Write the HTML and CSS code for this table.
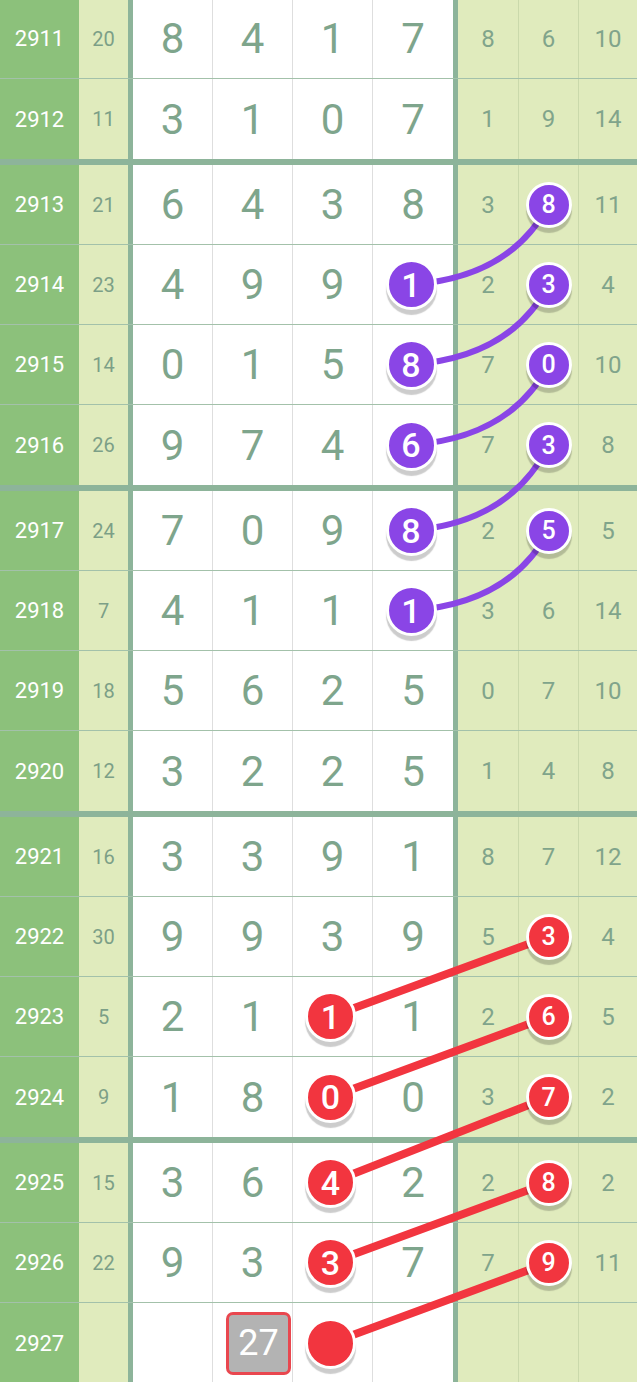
FILE: index.html
```html
<!DOCTYPE html>
<html>
<head>
<meta charset="utf-8">
<link rel="stylesheet" href="styles.css">
</head>
<body>
<div class="board">
  <div class="table">
    <div class="group">
      <div class="row"><div class="c issue">2911</div><div class="c sum">20</div><div class="c m m1">8</div><div class="c m">4</div><div class="c m">1</div><div class="c m">7</div><div class="c r r1">8</div><div class="c r">6</div><div class="c r">10</div></div>
      <div class="row"><div class="c issue">2912</div><div class="c sum">11</div><div class="c m m1">3</div><div class="c m">1</div><div class="c m">0</div><div class="c m">7</div><div class="c r r1">1</div><div class="c r">9</div><div class="c r">14</div></div>
    </div>
    <div class="group">
      <div class="row"><div class="c issue">2913</div><div class="c sum">21</div><div class="c m m1">6</div><div class="c m">4</div><div class="c m">3</div><div class="c m">8</div><div class="c r r1">3</div><div class="c r"><span class="ball sm purple">8</span></div><div class="c r">11</div></div>
      <div class="row"><div class="c issue">2914</div><div class="c sum">23</div><div class="c m m1">4</div><div class="c m">9</div><div class="c m">9</div><div class="c m"><span class="ball purple">1</span></div><div class="c r r1">2</div><div class="c r"><span class="ball sm purple">3</span></div><div class="c r">4</div></div>
      <div class="row"><div class="c issue">2915</div><div class="c sum">14</div><div class="c m m1">0</div><div class="c m">1</div><div class="c m">5</div><div class="c m"><span class="ball purple">8</span></div><div class="c r r1">7</div><div class="c r"><span class="ball sm purple">0</span></div><div class="c r">10</div></div>
      <div class="row"><div class="c issue">2916</div><div class="c sum">26</div><div class="c m m1">9</div><div class="c m">7</div><div class="c m">4</div><div class="c m"><span class="ball purple">6</span></div><div class="c r r1">7</div><div class="c r"><span class="ball sm purple">3</span></div><div class="c r">8</div></div>
    </div>
    <div class="group">
      <div class="row"><div class="c issue">2917</div><div class="c sum">24</div><div class="c m m1">7</div><div class="c m">0</div><div class="c m">9</div><div class="c m"><span class="ball purple">8</span></div><div class="c r r1">2</div><div class="c r"><span class="ball sm purple">5</span></div><div class="c r">5</div></div>
      <div class="row"><div class="c issue">2918</div><div class="c sum">7</div><div class="c m m1">4</div><div class="c m">1</div><div class="c m">1</div><div class="c m"><span class="ball purple">1</span></div><div class="c r r1">3</div><div class="c r">6</div><div class="c r">14</div></div>
      <div class="row"><div class="c issue">2919</div><div class="c sum">18</div><div class="c m m1">5</div><div class="c m">6</div><div class="c m">2</div><div class="c m">5</div><div class="c r r1">0</div><div class="c r">7</div><div class="c r">10</div></div>
      <div class="row"><div class="c issue">2920</div><div class="c sum">12</div><div class="c m m1">3</div><div class="c m">2</div><div class="c m">2</div><div class="c m">5</div><div class="c r r1">1</div><div class="c r">4</div><div class="c r">8</div></div>
    </div>
    <div class="group">
      <div class="row"><div class="c issue">2921</div><div class="c sum">16</div><div class="c m m1">3</div><div class="c m">3</div><div class="c m">9</div><div class="c m">1</div><div class="c r r1">8</div><div class="c r">7</div><div class="c r">12</div></div>
      <div class="row"><div class="c issue">2922</div><div class="c sum">30</div><div class="c m m1">9</div><div class="c m">9</div><div class="c m">3</div><div class="c m">9</div><div class="c r r1">5</div><div class="c r"><span class="ball sm red">3</span></div><div class="c r">4</div></div>
      <div class="row"><div class="c issue">2923</div><div class="c sum">5</div><div class="c m m1">2</div><div class="c m">1</div><div class="c m"><span class="ball red">1</span></div><div class="c m">1</div><div class="c r r1">2</div><div class="c r"><span class="ball sm red">6</span></div><div class="c r">5</div></div>
      <div class="row"><div class="c issue">2924</div><div class="c sum">9</div><div class="c m m1">1</div><div class="c m">8</div><div class="c m"><span class="ball red">0</span></div><div class="c m">0</div><div class="c r r1">3</div><div class="c r"><span class="ball sm red">7</span></div><div class="c r">2</div></div>
    </div>
    <div class="group">
      <div class="row"><div class="c issue">2925</div><div class="c sum">15</div><div class="c m m1">3</div><div class="c m">6</div><div class="c m"><span class="ball red">4</span></div><div class="c m">2</div><div class="c r r1">2</div><div class="c r"><span class="ball sm red">8</span></div><div class="c r">2</div></div>
      <div class="row"><div class="c issue">2926</div><div class="c sum">22</div><div class="c m m1">9</div><div class="c m">3</div><div class="c m"><span class="ball red">3</span></div><div class="c m">7</div><div class="c r r1">7</div><div class="c r"><span class="ball sm red">9</span></div><div class="c r">11</div></div>
      <div class="row"><div class="c issue">2927</div><div class="c sum"></div><div class="c m m1"></div><div class="c m"><span class="sumbox">27</span></div><div class="c m"><span class="ball red"></span></div><div class="c m"></div><div class="c r r1"></div><div class="c r"></div><div class="c r"></div></div>
    </div>
  </div>
  <svg class="links" width="637" height="1382" viewBox="0 0 637 1382">
    <g class="purple-links">
      <path d="M410.5 284.5 Q510 278 549 204.5"/>
      <path d="M410.5 364.5 Q510 358 549 284.5"/>
      <path d="M410.5 445 Q510 438 549 364.5"/>
      <path d="M410.5 530.5 Q510 523 549 445"/>
      <path d="M410.5 610.5 Q510 604 549 530.5"/>
    </g>
    <g class="red-links">
      <line x1="549" y1="936.5" x2="331" y2="1016.5"/>
      <line x1="549" y1="1016.5" x2="331" y2="1097"/>
      <line x1="549" y1="1097" x2="331" y2="1182.5"/>
      <line x1="549" y1="1182.5" x2="331" y2="1262.5"/>
      <line x1="549" y1="1262.5" x2="331" y2="1343"/>
    </g>
  </svg>
</div>
</body>
</html>
```
FILE: styles.css
```css
html, body {
  margin: 0;
  padding: 0;
  background: #ffffff;
}
.board {
  position: relative;
  width: 637px;
  height: 1382px;
  overflow: hidden;
  font-family: Roboto, "Noto Sans", sans-serif;
}
.table {
  margin-top: -1px;
}
.group + .group {
  border-top: 6px solid #8db49a;
}
.row {
  display: grid;
  grid-template-columns: 79px 49px 85px 80px 80px 80px 66px 60px 58px;
  height: 80px;
  box-sizing: border-box;
  border-bottom: 1px solid #a3c1aa;
}
.row:last-child {
  border-bottom: none;
}
.c {
  display: flex;
  align-items: center;
  justify-content: center;
  box-sizing: border-box;
  min-width: 0;
}
.issue {
  background: #8cc17b;
  color: #ffffff;
  font-size: 22px;
}
.sum {
  background: #e0ebbd;
  color: #7c9f87;
  font-size: 20px;
}
.m {
  background: #ffffff;
  color: #7ea58c;
  font-size: 42px;
  border-right: 1px solid #dedede;
}
.m1 {
  border-left: 5px solid #8db49a;
}
.m:nth-child(6) {
  border-right: none;
}
.r {
  background: #e0ebbd;
  color: #80a48b;
  font-size: 24px;
  border-right: 1px solid #cad9ab;
}
.r:last-child {
  border-right: none;
}
.r1 {
  border-left: 5px solid #8db49a;
}
.links {
  position: absolute;
  left: 0;
  top: 0;
  z-index: 1;
  pointer-events: none;
}
.purple-links path {
  fill: none;
  stroke: #8a45e6;
  stroke-width: 6;
  stroke-linecap: round;
}
.red-links line {
  stroke: #f2353f;
  stroke-width: 8;
  stroke-linecap: round;
}
.ball {
  position: relative;
  z-index: 2;
  display: flex;
  align-items: center;
  justify-content: center;
  width: 45px;
  height: 45px;
  margin-right: 4px;
  border: 3px solid #ffffff;
  border-radius: 50%;
  color: #ffffff;
  font-size: 34px;
  font-weight: 500;
  box-shadow: 0 5px 1px rgba(0, 0, 0, 0.2);
}
.ball.sm {
  width: 40px;
  height: 40px;
  margin-right: 0;
  font-size: 25px;
}
.purple {
  background: #8a45e6;
}
.red {
  background: #f2353f;
}
.sumbox {
  margin-left: 12px;
  width: 59px;
  height: 57px;
  display: flex;
  align-items: center;
  justify-content: center;
  background: #b3b3b3;
  border: 3px solid #e9474f;
  border-radius: 7px;
  color: #ffffff;
  font-size: 36px;
}
```
